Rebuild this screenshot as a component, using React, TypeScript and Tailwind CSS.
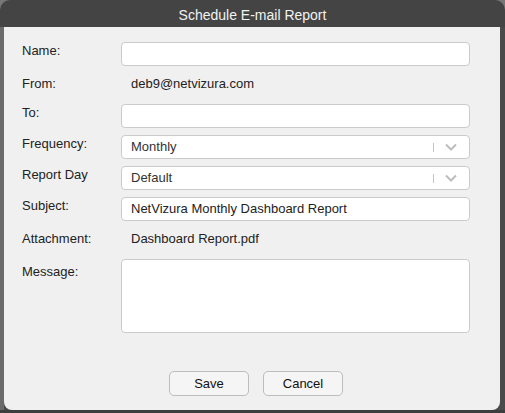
import React from "react";

const font = { fontFamily: '"Liberation Sans", Arial, sans-serif' };

function Label({ children, className = "" }: { children: React.ReactNode; className?: string }) {
  return <div className={`w-[99px] shrink-0 text-[13px] leading-[16px] text-[#222] ${className}`}>{children}</div>;
}

function TextBox({ value = "" }: { value?: string }) {
  return (
    <div className="flex h-[24px] w-[349px] items-center rounded-[4px] border border-[#cbcbcb] bg-white px-[9px] text-[13px] text-[#222]">
      {value}
    </div>
  );
}

function Select({ value }: { value: string }) {
  return (
    <div className="flex h-[24px] w-[349px] items-center rounded-[4px] border border-[#cbcbcb] bg-white pl-[9px] pr-[12px] text-[13px] text-[#333]">
      <span className="flex-1">{value}</span>
      <span className="mr-[11px] h-[9px] w-px bg-[#c4c4c4]" />
      <svg width="12" height="8" viewBox="0 0 12 8" fill="none">
        <path d="M1 1.5 6 6.5 11 1.5" stroke="#bdbdbd" strokeWidth="2" />
      </svg>
    </div>
  );
}

export default function App() {
  return (
    <div className="flex h-[413px] w-[505px] flex-col overflow-hidden bg-[#777]" style={font}>
      <div className="flex h-[27px] shrink-0 items-center justify-center rounded-t-[10px] bg-[#444] pt-[3px] text-[14px] text-[#f2f2f2]">
        Schedule E-mail Report
      </div>
      <div className="flex flex-1 flex-col bg-[#3e3e3e]">
        <div className="flex flex-1 bg-[linear-gradient(to_right,#6b6b6b_4px,#4a4a4a_4px)] pl-[4px] pr-[5px]">
          <div className="flex flex-1 flex-col rounded-b-[8px] bg-[#f0f0f0] pl-[18px] pt-[15px]">
            <div className="flex">
              <Label className="pt-[1px]">Name:</Label>
              <TextBox />
            </div>
            <div className="mt-[10px] flex">
              <Label>From:</Label>
              <div className="pl-[10px] text-[13px] leading-[16px] text-[#222]">deb9@netvizura.com</div>
            </div>
            <div className="mt-[12px] flex">
              <Label className="pt-[1px]">To:</Label>
              <TextBox />
            </div>
            <div className="mt-[7px] flex">
              <Label className="pt-[1px]">Frequency:</Label>
              <Select value="Monthly" />
            </div>
            <div className="mt-[7px] flex">
              <Label className="pt-[1px]">Report Day</Label>
              <Select value="Default" />
            </div>
            <div className="mt-[7px] flex">
              <Label className="pt-[1px]">Subject:</Label>
              <TextBox value="NetVizura Monthly Dashboard Report" />
            </div>
            <div className="mt-[10px] flex">
              <Label>Attachment:</Label>
              <div className="pl-[10px] text-[13px] leading-[16px] text-[#222]">Dashboard Report.pdf</div>
            </div>
            <div className="mt-[12px] flex">
              <Label className="pt-[5px]">Message:</Label>
              <div className="h-[74px] w-[349px] rounded-[4px] border border-[#cbcbcb] bg-white" />
            </div>
            <div className="mt-[38px] flex gap-[14px] pl-[147px]">
              <button className="h-[25px] w-[80px] rounded-[5px] border border-[#bdbdbd] bg-[#f5f5f5] text-[13px] text-[#111]">
                Save
              </button>
              <button className="h-[25px] w-[80px] rounded-[5px] border border-[#bdbdbd] bg-[#f5f5f5] text-[13px] text-[#111]">
                Cancel
              </button>
            </div>
          </div>
        </div>
        <div className="h-[3px] shrink-0" />
      </div>
    </div>
  );
}
